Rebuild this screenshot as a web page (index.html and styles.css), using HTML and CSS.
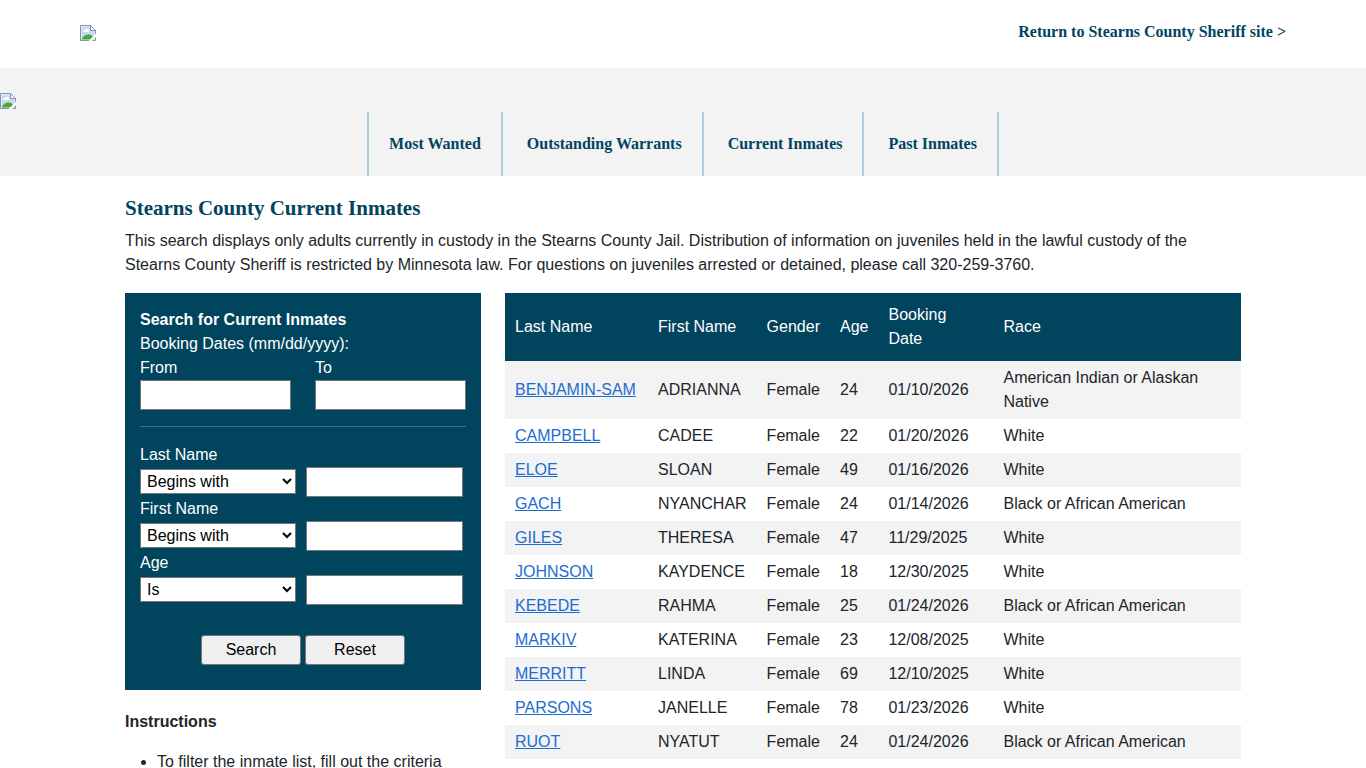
FILE: index.html
```html
<!DOCTYPE html>
<html lang="en">
<head>
  <meta charset="UTF-8">
  <meta name="viewport" content="width=device-width, initial-scale=1.0">
  <title>Stearns County Current Inmates</title>
  <link rel="stylesheet" href="styles.css">
</head>
<body>

  <svg width="0" height="0" class="sprite" aria-hidden="true">
    <symbol id="missing" viewBox="0 0 16 16">
      <path d="M0.5 0.5H11L15.5 5V15.5H0.5Z" fill="#fff"/>
      <path d="M1.5 1.5H10V6H14.5V14.5H1.5Z" fill="#c3d9f7"/>
      <path d="M3 7Q3 5 5 5Q6 3 8 4Q9.5 4.500 9 7Z" fill="#fff"/>
      <path d="M1.5 14.5Q4 9.5 8.5 9.5Q12.500 9.5 14.5 14.5Z" fill="#4ca535"/>
      <path d="M10.500 0.500V5.500H15.500Z" fill="#fff" stroke="#8195a9"/>
      <path d="M15.500 5V15.500H0.500V0.500H10.500" fill="none" stroke="#8195a9"/>
      <path d="M8.500 16L16 8.500V12L12 16Z" fill="#fff"/>
    </symbol>
  </svg>

  <header class="top-bar">
    <svg class="logo" role="img"><use href="#missing"/></svg>
    <a class="return-link" href="#">Return to Stearns County Sheriff site &gt;</a>
  </header>

  <div class="banner">
    <svg class="logo" role="img"><use href="#missing"/></svg>
    <nav class="main-nav">
      <a href="#">Most Wanted</a>
      <a href="#">Outstanding Warrants</a>
      <a href="#">Current Inmates</a>
      <a href="#">Past Inmates</a>
    </nav>
  </div>

  <main class="container">
    <h1>Stearns County Current Inmates</h1>
    <p class="intro">This search displays only adults currently in custody in the Stearns County Jail. Distribution of information on juveniles held in the lawful custody of the Stearns County Sheriff is restricted by Minnesota law. For questions on juveniles arrested or detained, please call 320-259-3760.</p>

    <div class="columns">
      <div class="sidebar">
        <form class="search-panel">
          <strong>Search for Current Inmates</strong>
          <div>Booking Dates (mm/dd/yyyy):</div>
          <div class="dates">
            <div>
              <label for="from">From</label>
              <input type="text" id="from">
            </div>
            <div>
              <label for="to">To</label>
              <input type="text" id="to">
            </div>
          </div>
          <hr>
          <label for="lastName">Last Name</label>
          <div class="criteria">
            <select aria-label="Last name match">
              <option>Begins with</option>
              <option>Contains</option>
            </select>
            <input type="text" id="lastName">
          </div>
          <label for="firstName">First Name</label>
          <div class="criteria">
            <select aria-label="First name match">
              <option>Begins with</option>
              <option>Contains</option>
            </select>
            <input type="text" id="firstName">
          </div>
          <label for="age">Age</label>
          <div class="criteria">
            <select aria-label="Age match">
              <option>Is</option>
            </select>
            <input type="text" id="age">
          </div>
          <div class="buttons">
            <button type="submit">Search</button>
            <button type="reset">Reset</button>
          </div>
        </form>

        <h2>Instructions</h2>
        <ul>
          <li>To filter the inmate list, fill out the criteria</li>
        </ul>
      </div>

      <table class="inmates">
        <thead>
          <tr>
            <th class="last">Last Name</th>
            <th class="first">First Name</th>
            <th class="gender">Gender</th>
            <th class="age">Age</th>
            <th class="booked">Booking Date</th>
            <th>Race</th>
          </tr>
        </thead>
        <tbody>
          <tr><td><a href="#">BENJAMIN-SAM</a></td><td>ADRIANNA</td><td>Female</td><td>24</td><td>01/10/2026</td><td>American Indian or Alaskan Native</td></tr>
          <tr><td><a href="#">CAMPBELL</a></td><td>CADEE</td><td>Female</td><td>22</td><td>01/20/2026</td><td>White</td></tr>
          <tr><td><a href="#">ELOE</a></td><td>SLOAN</td><td>Female</td><td>49</td><td>01/16/2026</td><td>White</td></tr>
          <tr><td><a href="#">GACH</a></td><td>NYANCHAR</td><td>Female</td><td>24</td><td>01/14/2026</td><td>Black or African American</td></tr>
          <tr><td><a href="#">GILES</a></td><td>THERESA</td><td>Female</td><td>47</td><td>11/29/2025</td><td>White</td></tr>
          <tr><td><a href="#">JOHNSON</a></td><td>KAYDENCE</td><td>Female</td><td>18</td><td>12/30/2025</td><td>White</td></tr>
          <tr><td><a href="#">KEBEDE</a></td><td>RAHMA</td><td>Female</td><td>25</td><td>01/24/2026</td><td>Black or African American</td></tr>
          <tr><td><a href="#">MARKIV</a></td><td>KATERINA</td><td>Female</td><td>23</td><td>12/08/2025</td><td>White</td></tr>
          <tr><td><a href="#">MERRITT</a></td><td>LINDA</td><td>Female</td><td>69</td><td>12/10/2025</td><td>White</td></tr>
          <tr><td><a href="#">PARSONS</a></td><td>JANELLE</td><td>Female</td><td>78</td><td>01/23/2026</td><td>White</td></tr>
          <tr><td><a href="#">RUOT</a></td><td>NYATUT</td><td>Female</td><td>24</td><td>01/24/2026</td><td>Black or African American</td></tr>
        </tbody>
      </table>
    </div>
  </main>

</body>
</html>
```
FILE: styles.css
```css
* {
  box-sizing: border-box;
}
body {
  margin: 0;
  background-color: #fff;
  color: #212529;
  font-family: "Liberation Sans", Arial, sans-serif;
  font-size: 16px;
  line-height: 24px;
}
.sprite {
  display: none;
}
.logo {
  display: block;
  width: 16px;
  height: 16px;
}

/* header */
.top-bar {
  display: flex;
  justify-content: space-between;
  padding: 20px 80px 24px;
}
.top-bar .logo {
  margin-top: 5px;
}
.return-link,
.main-nav a {
  color: #00445e;
  font-family: "Liberation Serif", "Times New Roman", serif;
  font-weight: bold;
  text-decoration: none;
}
.banner {
  background-color: #f3f3f3;
  padding-top: 25px;
}
.main-nav {
  display: flex;
  justify-content: center;
  gap: 4px;
  margin-top: 3px;
}
.main-nav a {
  padding: 20px;
  border-right: 2px solid #acd0e2;
}
.main-nav a:first-child {
  border-left: 2px solid #acd0e2;
}

/* content */
.container {
  max-width: 1140px;
  margin: 0 auto;
  padding: 20px 12px 0;
}
h1 {
  margin: 0 0 8px;
  color: #00445e;
  font-family: "Liberation Serif", "Times New Roman", serif;
  font-size: 21px;
  line-height: 25px;
}
.intro {
  margin: 0 0 16px;
}
.columns {
  display: grid;
  grid-template-columns: 356fr 736fr;
  gap: 24px;
  align-items: start;
}

/* search form */
.search-panel {
  padding: 15px 15px 25px;
  background-color: #00445e;
  color: #fff;
}
.search-panel strong,
.search-panel label {
  display: block;
}
.search-panel input,
.search-panel select,
.search-panel button {
  font-family: inherit;
  font-size: 16px;
}
.search-panel input {
  display: block;
  width: 100%;
  height: 30px;
  border: 1px solid #767676;
}
.dates {
  display: grid;
  grid-template-columns: 1fr 1fr;
  gap: 24px;
}
.search-panel hr {
  margin: 16px 0;
  border: 0;
  border-top: 1px solid #40738a;
}
.criteria {
  display: grid;
  grid-template-columns: 156fr 157fr;
  align-items: center;
  gap: 10px;
  padding-right: 3px;
}
.criteria select {
  width: 100%;
  height: 25px;
  margin: 0 0 1px;
  padding: 0 2px;
  border: 1px solid #767676;
  border-radius: 0;
  background-color: #fff;
  color: #000;
}
.buttons {
  display: flex;
  justify-content: center;
  gap: 4px;
  margin-top: 30px;
}
.buttons button {
  width: 100px;
  height: 30px;
  border: 1px solid #767676;
  border-radius: 3px;
  background-color: #efefef;
  color: #000;
}
h2 {
  margin: 20px 0 16px;
  font-size: 16px;
  line-height: 24px;
}
ul {
  margin: 0;
  padding-left: 32px;
}

/* results */
.inmates {
  width: 100%;
  border-collapse: collapse;
}
.inmates th {
  padding: 10px;
  background-color: #00445e;
  color: #fff;
  font-weight: normal;
  text-align: left;
}
.inmates td {
  padding: 5px 10px;
}
.inmates tbody tr:nth-child(odd) {
  background-color: #f3f3f3;
}
.inmates a {
  color: #1c6dd0;
}
.last {
  width: 143px;
}
.first {
  width: 108px;
}
.gender {
  width: 73px;
}
.age {
  width: 48px;
}
.booked {
  width: 115px;
}
```
